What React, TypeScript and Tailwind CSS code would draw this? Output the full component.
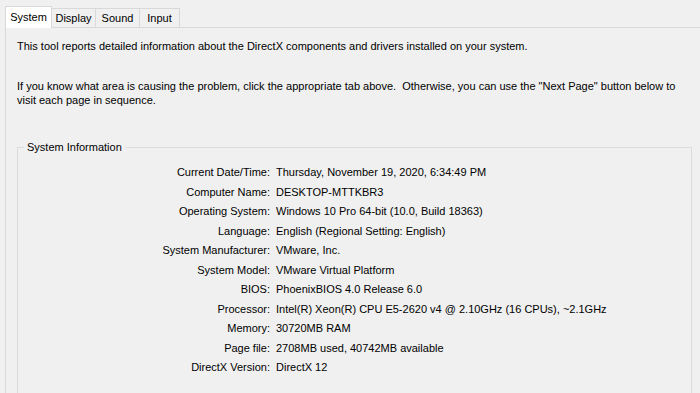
const rows: [string, string][] = [
  ['Current Date/Time:', 'Thursday, November 19, 2020, 6:34:49 PM'],
  ['Computer Name:', 'DESKTOP-MTTKBR3'],
  ['Operating System:', 'Windows 10 Pro 64-bit (10.0, Build 18363)'],
  ['Language:', 'English (Regional Setting: English)'],
  ['System Manufacturer:', 'VMware, Inc.'],
  ['System Model:', 'VMware Virtual Platform'],
  ['BIOS:', 'PhoenixBIOS 4.0 Release 6.0'],
  ['Processor:', 'Intel(R) Xeon(R) CPU E5-2620 v4 @ 2.10GHz (16 CPUs), ~2.1GHz'],
  ['Memory:', '30720MB RAM'],
  ['Page file:', '2708MB used, 40742MB available'],
  ['DirectX Version:', 'DirectX 12'],
];

const tabs: [string, string][] = [
  ['System', 'w-[47px]'],
  ['Display', 'w-[44px]'],
  ['Sound', 'w-[44px]'],
  ['Input', 'w-[40px]'],
];

export default function App() {
  return (
    <div
      className="w-[700px] h-[393px] overflow-hidden bg-[#f0f0f0] text-black text-[11px]"
      style={{ fontFamily: '"Liberation Sans", Arial, sans-serif' }}
    >
      <div className="flex items-end pl-[5px] pt-[6px] h-[27px]">
        {tabs.map(([t, w], i) =>
          i === 0 ? (
            <div
              key={t}
              className={`${w} relative z-10 h-[22px] -mb-px pt-[2px] text-center bg-white border border-b-0 border-[#d9d9d9] leading-[16px]`}
            >
              {t}
            </div>
          ) : (
            <div
              key={t}
              className={`${w} h-[19px] pt-px text-center border border-l-0 border-b-0 border-[#d9d9d9] leading-[16px]`}
            >
              {t}
            </div>
          )
        )}
      </div>
      <div className="ml-[5px] border-t border-l border-[#d9d9d9] h-[366px] pl-[11px] pt-[11px]">
        <p className="leading-[14px]">
          This tool reports detailed information about the DirectX components and drivers installed on your system.
        </p>
        <p className="mt-[26px] leading-[14px] w-[676px]">
          If you know what area is causing the problem, click the appropriate tab above.&nbsp; Otherwise, you can use the "Next Page" button below to visit each page in sequence.
        </p>
        <fieldset className="mt-[33px] w-[675px] h-[260px] border border-[#dcdcdc] px-0 pt-[9px]">
          <legend className="ml-[6px] px-[3px] leading-[14px]">System Information</legend>
          <div className="grid grid-cols-[252px_1fr] gap-x-[6px]">
            {rows.map(([k, v]) => (
              <div key={k} className="contents">
                <div className="text-right leading-[19.5px] whitespace-nowrap">{k}</div>
                <div className="leading-[19.5px] whitespace-nowrap">{v}</div>
              </div>
            ))}
          </div>
        </fieldset>
      </div>
    </div>
  );
}
